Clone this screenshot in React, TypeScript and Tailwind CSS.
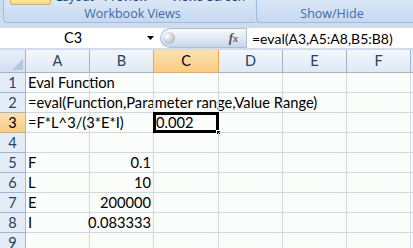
const cols = ['A', 'B', 'C', 'D', 'E', 'F'];
const widths = ['w-[64px]', 'w-[64px]', 'w-[65px]', 'w-[64px]', 'w-[64px]', 'w-[64px]'];

type Cell = { text?: string; right?: boolean };

const rows: Record<number, Cell[]> = {
  1: [{ text: 'Eval Function' }],
  2: [{ text: '=eval(Function,Parameter range,Value Range)' }],
  3: [{ text: '=F*L^3/(3*E*I)' }, {}, { text: '0.002' }],
  4: [],
  5: [{ text: 'F' }, { text: '0.1', right: true }],
  6: [{ text: 'L' }, { text: '10', right: true }],
  7: [{ text: 'E' }, { text: '200000', right: true }],
  8: [{ text: 'I' }, { text: '0.083333', right: true }],
  9: [],
};

const Ribbon = () => (
  <div className="flex h-[24px]">
    <div className="ml-[3px] w-[252px] h-[23px] flex flex-col border-l border-b border-[#9fbbe0] rounded-bl-[4px] bg-gradient-to-b from-[#dbe7f6] to-[#c6d9f1]">
      <div className="relative h-[6px] overflow-hidden text-[12px] text-[#15428b]">
        <div className="absolute left-[6px] top-0 w-[41px] h-[5px] rounded-b-[3px] border border-t-0 border-[#dbb05a] bg-gradient-to-b from-[#ffe9a8] to-[#ffd466]" />
        <span className="absolute left-[52px] top-[-10px] leading-[14px]">Layout</span>
        <span className="absolute left-[100px] top-[-10px] leading-[14px]">Preview</span>
        <span className="absolute left-[167px] top-[-10px] leading-[14px]">Views</span>
        <span className="absolute left-[203px] top-[-10px] leading-[14px]">Screen</span>
      </div>
      <div className="flex-1 flex items-center justify-center pl-[6px] text-[12.5px] leading-none text-[#416bab]">
        Workbook Views
      </div>
    </div>
    <div className="ml-[1px] flex-1 h-[23px] flex flex-col border-l border-b border-[#9fbbe0] rounded-bl-[4px] bg-gradient-to-b from-[#dbe7f6] to-[#c6d9f1]">
      <div className="h-[6px]" />
      <div className="flex-1 flex items-center justify-center pr-[6px] text-[12.5px] leading-none text-[#416bab]">
        Show/Hide
      </div>
    </div>
  </div>
);

const FormulaBar = () => (
  <div className="mt-[4px] h-[20px] flex bg-white">
    <div className="w-[160px] relative flex items-center">
      <span className="ml-[64px] text-[14.5px] font-['Lato',sans-serif] text-black">C3</span>
      <svg className="absolute left-[147px] top-[8px]" width="7" height="4" viewBox="0 0 7 4">
        <path d="M0 0h7L3.5 4z" fill="#000" />
      </svg>
    </div>
    <div className="w-[86px] relative flex items-center rounded-l-full border border-r-0 border-[#a9bfdc] bg-gradient-to-b from-[#f7f9fc] via-[#e3eaf4] to-[#c9d6e8]">
      <div className="absolute left-[2px] top-[3px] w-[12px] h-[12px] rounded-full bg-[radial-gradient(circle_at_35%_35%,#ffffff,#9aa4b0)]" />
      <span className="ml-auto mr-[8px] font-['Liberation_Serif',serif] italic font-bold text-[13px] text-[#555]">
        f<span className="text-[10px]">x</span>
      </span>
    </div>
    <div className="flex-1 flex items-center border-l border-[#a9bfdc] pl-[5px] text-[14px] font-['Lato',sans-serif] text-black">
      =eval(A3,A5:A8,B5:B8)
    </div>
  </div>
);

const Sheet = () => (
  <div className="mt-[2px] bg-[#fbfdfb] font-['Lato',sans-serif]">
    <div className="flex h-[23px]">
      <div className="w-[26px] relative border-r border-b border-[#9eb6ce] bg-gradient-to-b from-[#e9eff8] to-[#d3def0]">
        <svg className="absolute right-[2px] bottom-[2px]" width="11" height="11" viewBox="0 0 11 11">
          <path d="M11 0V11H0z" fill="#b3c5e0" />
        </svg>
      </div>
      {cols.map((c, i) => (
        <div
          key={c}
          className={`${widths[i]} flex items-center justify-center border-r border-b text-[14.5px] ${
            c === 'C'
              ? 'border-[#f2a948] bg-gradient-to-b from-[#fbe1b0] to-[#f8cc84] text-black'
              : 'border-[#9eb6ce] bg-gradient-to-b from-[#f4f7fc] to-[#e0e8f3] text-[#27415f]'
          }`}
        >
          {c}
        </div>
      ))}
      <div className="flex-1 border-b border-[#9eb6ce] bg-[#e4ebf5]" />
    </div>
    {Object.entries(rows).map(([n, cells]) => (
      <div key={n} className="flex h-[20px]">
        <div
          className={`w-[26px] flex items-center justify-center border-r border-b text-[14.5px] ${
            n === '3'
              ? 'border-[#f2a948] bg-gradient-to-b from-[#fbe1b0] to-[#f8cc84] text-black'
              : 'border-[#9eb6ce] bg-[#e4ecf7] text-[#27415f]'
          }`}
        >
          {n}
        </div>
        {cols.map((c, i) => {
          const cell = cells[i];
          return (
            <div
              key={c}
              className={`${widths[i]} relative border-r border-b border-[#d0d7e5] text-[14.7px] leading-[19px] text-black`}
            >
              {cell?.text && (
                <span
                  className={`absolute bottom-0 whitespace-nowrap ${cell.right ? 'right-[2px]' : 'left-[2px]'}`}
                >
                  {cell.text}
                </span>
              )}
              {n === '3' && c === 'C' && (
                <>
                  <div className="absolute -left-[1px] -top-[1px] w-[66px] h-[21px] border-[3px] border-black" />
                  <div className="absolute -right-[3px] -bottom-[3px] w-[5px] h-[5px] bg-black border border-white" />
                </>
              )}
            </div>
          );
        })}
        <div className="flex-1 border-b border-[#d0d7e5]" />
      </div>
    ))}
  </div>
);

export default function App() {
  return (
    <div className="w-[413px] h-[248px] overflow-hidden bg-[#cfdcee] font-['Open_Sans',sans-serif]">
      <Ribbon />
      <FormulaBar />
      <Sheet />
    </div>
  );
}
